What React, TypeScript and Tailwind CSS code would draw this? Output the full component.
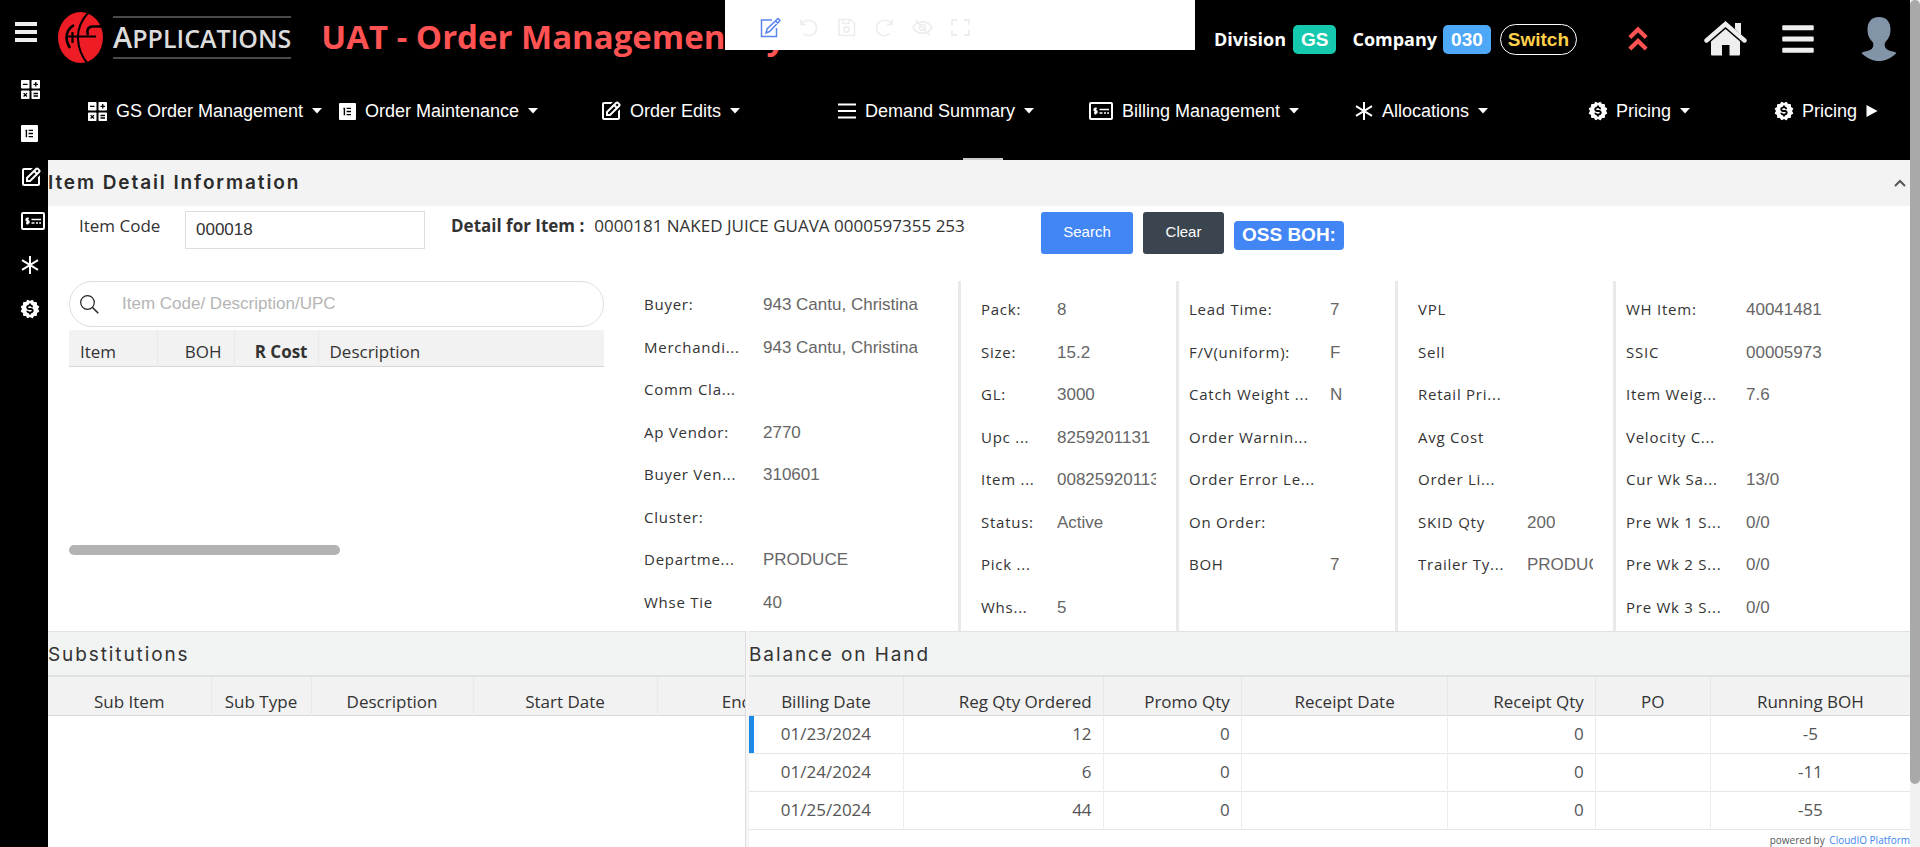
import type { ReactNode } from "react";
import { BiEdit, BiSolidBadgeDollar } from "react-icons/bi";
import { FaBars } from "react-icons/fa";

const sans = "font-['Open_Sans','Noto_Sans',sans-serif]";
const arial = "font-['Liberation_Sans',Arial,sans-serif]";
const heading = "font-['Inter','Noto_Sans',sans-serif]";

function OperatorsIcon() {
  return (
    <svg width="19" height="19" viewBox="0 0 19 19" aria-hidden="true">
      <g fill="#fff">
        <rect x="0" y="0" width="8.5" height="8.5" rx="0.8" />
        <rect x="10.5" y="0" width="8.5" height="8.5" rx="0.8" />
        <rect x="0" y="10.5" width="8.5" height="8.5" rx="0.8" />
        <rect x="10.5" y="10.5" width="8.5" height="8.5" rx="0.8" />
      </g>
      <g stroke="#000" strokeWidth="1.3">
        <path d="M2 4.3h4.5M12.5 4.3H17M14.75 2v4.5M2.6 13.1l3.4 3.4M6 13.1l-3.4 3.4M12.5 13.5H17M12.5 16H17" />
      </g>
    </svg>
  );
}

function ListBoxIcon() {
  return (
    <svg width="17" height="17" viewBox="0 0 17 17" aria-hidden="true">
      <rect width="17" height="17" rx="1" fill="#fff" />
      <path d="M5.4 4.8v7.4M4.4 5.5h1M7.6 5.4H12M7.6 8.5H12M7.6 11.6H12" stroke="#000" strokeWidth="1.4" />
    </svg>
  );
}

function LinesIcon() {
  return (
    <svg width="18" height="16" viewBox="0 0 18 16" aria-hidden="true">
      <path d="M0 1.5h18M0 8h18M0 14.5h18" stroke="#fff" strokeWidth="2" />
    </svg>
  );
}

function BillIcon() {
  return (
    <svg width="24" height="18" viewBox="0 0 24 18" aria-hidden="true">
      <rect x="1" y="1" width="22" height="16" rx="1" fill="none" stroke="#fff" strokeWidth="2" />
      <path
        d="M7.8 6.6H6.2c-1.5 0-1.5 2.2 0 2.2h.7c1.5 0 1.5 2.3 0 2.3H5M6.5 5.4v7M10.5 7.5H20M10.5 11h3M15 11h2M18.2 11H20"
        fill="none"
        stroke="#fff"
        strokeWidth="1.5"
      />
    </svg>
  );
}

function AsteriskIcon() {
  return (
    <svg width="18" height="18" viewBox="0 0 18 18" aria-hidden="true">
      <path d="M9 0v18M1 4.2l16 9.6M17 4.2L1 13.8" stroke="#fff" strokeWidth="2" />
    </svg>
  );
}

function EditIcon() {
  return <BiEdit className="-mx-0.5 size-6" aria-hidden="true" />;
}

function BadgeIcon() {
  return <BiSolidBadgeDollar className="-mx-0.5 size-[22px]" aria-hidden="true" />;
}

function SearchIcon() {
  return (
    <svg width="19" height="19" viewBox="0 0 19 19" aria-hidden="true">
      <circle cx="7.5" cy="7.5" r="6.8" fill="none" stroke="#222" strokeWidth="1.2" />
      <path d="M12.3 12.3l6 6" stroke="#222" strokeWidth="1.5" />
    </svg>
  );
}

function DoubleUpIcon() {
  return (
    <svg width="20" height="26" viewBox="0 0 20 26" aria-hidden="true">
      <path d="M1.800 11.500L10 3.500l8.200 8M1.800 23L10 15l8.200 8" fill="none" stroke="#ff5252" strokeWidth="4.200" />
    </svg>
  );
}

function HomeIcon() {
  return (
    <svg width="43" height="36" viewBox="0 0 43 36" aria-hidden="true">
      <path d="M31 2h6v12l-6-6z" fill="#eee" />
      <path d="M2.5 19.5L21.5 3l19 16.5" fill="none" stroke="#eee" strokeWidth="4.4" strokeLinecap="round" />
      <path d="M7 20.500L21.500 8L36 20.500V33.500q0 1-1 1H25.500V24h-7.500v10.500H8q-1 0-1-1z" fill="#eee" />
    </svg>
  );
}

function AvatarIcon() {
  return (
    <svg width="36" height="44" viewBox="0 0 36 44" aria-hidden="true">
      <path
        d="M18 0C10 0 6.5 5.5 6.500 12.500C6.500 19 9 22.500 12 25.500C13 29 12 31.500 9 33C5.500 34.500 2.500 34.500 0.500 36C6 41.500 12 44 18 44C24 44 30 41.500 35.500 36C33.500 34.500 30.500 34.500 27 33C24 31.500 23 29 24 25.500C27 22.500 29.500 19 29.500 12.500C29.500 5.500 26 0 18 0Z"
        fill="#8294a8"
      />
    </svg>
  );
}

function Logo() {
  return (
    <div className="flex items-center gap-[10px]">
      <svg width="45" height="51" viewBox="0 0 45 51" aria-hidden="true">
        <ellipse cx="22.5" cy="25.5" rx="22.5" ry="25.5" fill="#ee1c25" />
        <g fill="none" stroke="#000">
          <path d="M31 0C23 8 19.500 17 20 27C20.500 37 24 45 30 52" strokeWidth="2" />
          <path d="M16 13C11 16 8.500 20 8.500 25.500C8.500 30 10 33 12 36" strokeWidth="2.600" />
          <path d="M14.500 20V31M9 24.500H38" strokeWidth="2.200" />
          <path d="M45 14.500H34C29.500 15 28.500 19 30 23" strokeWidth="2.600" />
        </g>
      </svg>
      <div className={`${sans} border-y-2 border-[#4a4a4a] py-[3px] text-[29px] leading-8 font-semibold text-[#dcdcdc]`}>
        A<span className="text-[25px]">PPLICATIONS</span>
      </div>
    </div>
  );
}

function Caret() {
  return (
    <svg width="10" height="6" viewBox="0 0 10 6" aria-hidden="true">
      <path d="M0 0h10L5 5.5z" fill="#fff" />
    </svg>
  );
}

const navItems: { label: string; icon: ReactNode }[] = [
  { label: "GS Order Management", icon: <OperatorsIcon /> },
  { label: "Order Maintenance", icon: <ListBoxIcon /> },
  { label: "Order Edits", icon: <EditIcon /> },
  { label: "Demand Summary", icon: <LinesIcon /> },
  { label: "Billing Management", icon: <BillIcon /> },
  { label: "Allocations", icon: <AsteriskIcon /> },
  { label: "Pricing", icon: <BadgeIcon /> },
];

const sideItems = navItems.filter((item) => item.label !== "Demand Summary");

function EditorToolbar() {
  const glyph = "size-[21px] fill-none stroke-current";
  return (
    <div className="absolute top-0 left-[725px] flex h-[50px] w-[470px] items-center gap-[17px] bg-white pt-1 pl-[35px] text-[#ededed]">
      <button aria-label="Edit" className="text-[#5b84ee]">
        <svg className={glyph} viewBox="0 0 21 21" strokeWidth="1.5">
          <path d="M12 3H1.500v16.500h15V11M18 1.500l2 2L9.500 14.500L6 16l1-4zM15.500 4l2.500 2.500" />
        </svg>
      </button>
      <button aria-label="Undo">
        <svg className={glyph} viewBox="0 0 21 21" strokeWidth="1.6">
          <path d="M3 2.500v5h5M3.500 7C9 0 18.500 4 18.500 11C18.500 18 10 21 5.500 16.500" />
        </svg>
      </button>
      <button aria-label="Save">
        <svg className={glyph} viewBox="0 0 21 21" strokeWidth="1.6">
          <path d="M3 2.500h11.500l4 4v12H3zM7 2.500v4h6v-4" />
          <circle cx="10.5" cy="12.5" r="2.6" />
        </svg>
      </button>
      <button aria-label="Redo">
        <svg className={glyph} viewBox="0 0 21 21" strokeWidth="1.6">
          <path d="M18 2.500v5h-5M17.500 7C12 0 2.500 4 2.500 11C2.500 18 11 21 15.500 16.500" />
        </svg>
      </button>
      <button aria-label="Hide">
        <svg className={glyph} viewBox="0 0 21 21" strokeWidth="1.6">
          <path d="M1 10.500C5 3 16 3 20 10.500C16 18 5 18 1 10.500zM3 2.500l15 16" />
          <circle cx="10.5" cy="10.5" r="3" />
        </svg>
      </button>
      <button aria-label="Full screen">
        <svg className={glyph} viewBox="0 0 21 21" strokeWidth="1.8">
          <path d="M7 3H2v5M2 13v5h5M14 3h5v5M19 13v5h-5" />
        </svg>
      </button>
    </div>
  );
}

type Field = [label: string, value: string];

const detailColumns: { labelWidth: string; className: string; fields: Field[] }[] = [
  {
    labelWidth: "w-[119px]",
    className: "border-r-[3px] pl-5 pt-[2px]",
    fields: [
      ["Buyer:", "943 Cantu, Christina"],
      ["Merchandi...", "943 Cantu, Christina"],
      ["Comm Cla...", ""],
      ["Ap Vendor:", "2770"],
      ["Buyer Ven...", "310601"],
      ["Cluster:", ""],
      ["Departme...", "PRODUCE"],
      ["Whse Tie", "40"],
    ],
  },
  {
    labelWidth: "w-[76px]",
    className: "border-r-[3px] px-5 pt-[7px]",
    fields: [
      ["Pack:", "8"],
      ["Size:", "15.2"],
      ["GL:", "3000"],
      ["Upc ...", "8259201131"],
      ["Item ...", "008259201131"],
      ["Status:", "Active"],
      ["Pick ...", ""],
      ["Whs...", "5"],
    ],
  },
  {
    labelWidth: "w-[141px]",
    className: "border-r-[3px] pl-[10px] pt-[7px]",
    fields: [
      ["Lead Time:", "7"],
      ["F/V(uniform):", "F"],
      ["Catch Weight ...", "N"],
      ["Order Warnin...", ""],
      ["Order Error Le...", ""],
      ["On Order:", ""],
      ["BOH", "7"],
    ],
  },
  {
    labelWidth: "w-[109px]",
    className: "border-r-[3px] px-5 pt-[7px]",
    fields: [
      ["VPL", ""],
      ["Sell", ""],
      ["Retail Pri...", ""],
      ["Avg Cost", ""],
      ["Order Li...", ""],
      ["SKID Qty", "200"],
      ["Trailer Ty...", "PRODUCE"],
    ],
  },
  {
    labelWidth: "w-[120px]",
    className: "pl-[10px] pt-[7px]",
    fields: [
      ["WH Item:", "40041481"],
      ["SSIC", "00005973"],
      ["Item Weig...", "7.6"],
      ["Velocity C...", ""],
      ["Cur Wk Sa...", "13/0"],
      ["Pre Wk 1 S...", "0/0"],
      ["Pre Wk 2 S...", "0/0"],
      ["Pre Wk 3 S...", "0/0"],
    ],
  },
];

const balanceRows = [
  ["01/23/2024", "12", "0", "", "0", "", "-5"],
  ["01/24/2024", "6", "0", "", "0", "", "-11"],
  ["01/25/2024", "44", "0", "", "0", "", "-55"],
];

const balanceColumns = [
  { name: "Billing Date", align: "text-center" },
  { name: "Reg Qty Ordered", align: "text-right" },
  { name: "Promo Qty", align: "text-right" },
  { name: "Receipt Date", align: "text-center" },
  { name: "Receipt Qty", align: "text-right" },
  { name: "PO", align: "text-center" },
  { name: "Running BOH", align: "text-center" },
];

function PanelTitle({ children }: { children: ReactNode }) {
  return (
    <h2 className={`${heading} h-[46px] border-t border-b-2 border-[#e0e3e3] bg-[#f2f3f3] text-[19px] leading-[46px] tracking-widest text-[#333]`}>
      {children}
    </h2>
  );
}

export default function App() {
  return (
    <div className={`${sans} relative flex min-h-screen bg-white text-[#333]`}>
      <aside className="w-12 shrink-0 bg-black text-white">
        <button aria-label="Toggle menu" className="mt-[22px] ml-[15px] flex w-[22px] flex-col gap-1">
          <span className="h-1 w-full bg-[#eee]" />
          <span className="h-1 w-full bg-[#eee]" />
          <span className="h-1 w-full bg-[#eee]" />
        </button>
        <nav aria-label="Side" className="mt-[25px] pl-[21px]">
          {sideItems.map((item) => (
            <a key={item.label} href="#" aria-label={item.label} className="flex h-11 items-center">
              {item.icon}
            </a>
          ))}
        </nav>
      </aside>

      <div className="flex min-w-0 flex-1 flex-col">
        <header className="relative h-40 bg-black text-white">
          <div className="flex h-[74px] items-center pl-[10px]">
            <Logo />
            <h1 className="ml-[30px] text-[33px] font-bold whitespace-nowrap text-[#ff5252]">
              UAT - Order Management System
            </h1>
            <div className="ml-auto flex items-center pt-1 pr-[13px] text-[18px] leading-[29px] font-bold">
              <span>Division</span>
              <span className={`${arial} ml-[7px] rounded-[5px] bg-[#14c9ae] px-2 text-[19px]`}>GS</span>
              <span className="ml-4">Company</span>
              <span className={`${arial} ml-[6px] rounded-[5px] bg-[#4da8f7] px-2 text-[19px]`}>030</span>
              <button className={`${arial} ml-[9px] rounded-full border border-white px-[7px] text-[19px] font-bold text-[#ffd04a]`}>
                Switch
              </button>
              <button aria-label="Collapse header" className="ml-[51px]">
                <DoubleUpIcon />
              </button>
              <a href="#" aria-label="Home" className="ml-14">
                <HomeIcon />
              </a>
              <button aria-label="Menu" className="ml-[33px]">
                <FaBars className="size-[36px] text-[#eee]" />
              </button>
              <button aria-label="Account" className="ml-[45px]">
                <AvatarIcon />
              </button>
            </div>
          </div>
          <nav
            aria-label="Main"
            className={`${arial} grid h-[74px] grid-cols-[251fr_262fr_237fr_251fr_266fr_234fr_186fr_135fr] items-center pl-10 text-[18px]`}
          >
            {navItems.map((item) => (
              <button key={item.label} className="flex items-center gap-[9px] whitespace-nowrap">
                {item.icon}
                {item.label}
                <Caret />
              </button>
            ))}
            <button className="flex items-center gap-[9px] whitespace-nowrap">
              <BadgeIcon />
              Pricing
              <svg width="12" height="12" viewBox="0 0 12 12" aria-hidden="true">
                <path d="M0.5 0v12L11.5 6z" fill="#fff" />
              </svg>
            </button>
          </nav>
          <div className="absolute bottom-0 left-1/2 h-[2px] w-10 -translate-x-4 bg-[#ccc]" />
        </header>

        <section>
          <h2 className={`${heading} flex h-[46px] items-center justify-between bg-[#f3f3f3] pr-1 text-[19px] font-semibold tracking-widest text-[#2b2b2b]`}>
            Item Detail Information
            <button aria-label="Collapse section">
              <svg width="12" height="8" viewBox="0 0 12 8" aria-hidden="true">
                <path d="M1 7l5-5l5 5" fill="none" stroke="#555" strokeWidth="2" />
              </svg>
            </button>
          </h2>

          <div className="flex h-[75px] items-start pt-[5px] pl-[31px] text-[17px]">
            <label htmlFor="item-code" className="w-[106px] leading-[30px]">
              Item Code
            </label>
            <input
              id="item-code"
              defaultValue="000018"
              className={`${arial} h-[38px] w-[240px] border border-[#ddd] px-[10px] text-[17px] text-[#333]`}
            />
            <p className="ml-[26px] w-[590px] leading-[30px] whitespace-nowrap">
              <strong className="font-bold">Detail for Item :</strong>
              <span className="ml-[10px]">0000181 NAKED JUICE GUAVA 0000597355 253</span>
            </p>
            <div className={`${arial} flex gap-[10px] pt-px text-[15px] text-white`}>
              <button className="h-[42px] w-[92px] rounded-[3px] bg-[#4285f4] pb-[2px]">Search</button>
              <button className="h-[42px] w-[81px] rounded-[3px] bg-[#3b4550] pb-[2px]">Clear</button>
              <span className="mt-[9px] h-[29px] rounded-[4px] bg-[#4285f4] px-2 text-[19px] leading-[27px] font-bold">
                OSS BOH:
              </span>
            </div>
          </div>

          <div className="grid grid-cols-[576fr_337fr_218fr_219fr_218fr_294fr]">
            <div className="min-w-0 pr-5 pl-[21px]">
              <label className="flex h-[46px] items-center rounded-full border border-[#dfdfdf] pl-[10px]">
                <SearchIcon />
                <input
                  aria-label="Search items"
                  placeholder="Item Code/ Description/UPC"
                  className={`${arial} ml-[23px] min-w-0 flex-1 text-[17px] outline-none placeholder:text-[#b5b5b5]`}
                />
              </label>
              <table className="mt-[3px] w-full table-fixed text-[17px]">
                <thead>
                  <tr className="h-9 border-b border-[#d8d8d8] bg-[#f2f2f2] [&>th]:pt-2 [&>th]:leading-6">
                    <th className="w-[88px] border-r border-[#e9e9e9] pl-[11px] text-left font-normal">Item</th>
                    <th className="w-[77px] border-r border-[#e9e9e9] pr-3 text-right font-normal">BOH</th>
                    <th className="w-[84px] border-r border-[#e9e9e9] pr-[10px] text-right font-bold">R Cost</th>
                    <th className="pl-[11px] text-left font-normal">Description</th>
                  </tr>
                </thead>
              </table>
              <div className="mt-[178px] h-[10px] w-[271px] rounded-full bg-[#b3b3b3]" />
            </div>
            {detailColumns.map((column) => (
              <dl key={column.labelWidth} className={`${column.className} h-[350px] min-w-0 border-[#e9e9e9]`}>
                {column.fields.map(([label, value]) => (
                  <div key={label} className="flex items-baseline overflow-hidden leading-[42px] odd:h-[43px] even:h-[42px]">
                    <dt className={`${column.labelWidth} shrink-0 text-[15px] tracking-wider whitespace-nowrap`}>{label}</dt>
                    <dd className={`${arial} min-w-0 overflow-hidden text-[17px] whitespace-nowrap text-[#666]`}>{value}</dd>
                  </div>
                ))}
              </dl>
            ))}
          </div>
        </section>

        <div className="grid flex-1 grid-cols-[698fr_3fr_1161fr]">
          <section className="min-w-0 overflow-hidden border-r border-[#ddd]">
            <PanelTitle>Substitutions</PanelTitle>
            <table className="w-[811px] table-fixed text-[17px]">
              <thead>
                <tr className="h-[38px] border-b border-[#d8d8d8] bg-[#f2f2f2] [&>th]:border-r [&>th]:border-[#e9e9e9] [&>th]:pt-3 [&>th]:leading-6 [&>th]:font-normal">
                  <th className="w-[163px]">Sub Item</th>
                  <th className="w-[100px]">Sub Type</th>
                  <th className="w-[162px]">Description</th>
                  <th className="w-[184px]">Start Date</th>
                  <th>End Date</th>
                </tr>
              </thead>
            </table>
          </section>
          <div className="bg-[#f5f5f5]" />
          <section className="flex min-w-0 flex-col">
            <PanelTitle>Balance on Hand</PanelTitle>
            <table className="w-full table-fixed text-[17px]">
              <colgroup>
                <col className="w-[13.3%]" />
                <col className="w-[17.2%]" />
                <col className="w-[11.9%]" />
                <col className="w-[17.8%]" />
                <col className="w-[12.7%]" />
                <col className="w-[9.9%]" />
                <col className="w-[17.2%]" />
              </colgroup>
              <thead>
                <tr className="h-[38px] border-b border-[#d8d8d8] bg-[#f2f2f2]">
                  {balanceColumns.map((column) => (
                    <th
                      key={column.name}
                      className={`${column.align} border-r border-[#e6e6e6] px-[11px] pt-3 leading-6 font-normal whitespace-nowrap last:border-r-0`}
                    >
                      {column.name}
                    </th>
                  ))}
                </tr>
              </thead>
              <tbody>
                {balanceRows.map((row) => (
                  <tr key={row[0]} className="h-[38px] border-b border-[#e6e6e6] text-[#555]">
                    {row.map((cell, index) => (
                      <td
                        key={balanceColumns[index].name}
                        className={`${balanceColumns[index].align} border-r border-[#ececec] px-[11px] last:border-r-0 ${
                          index === 0 && row[0] === "01/23/2024" ? "shadow-[inset_5px_0_0_#1e88e5]" : ""
                        }`}
                      >
                        {cell}
                      </td>
                    ))}
                  </tr>
                ))}
              </tbody>
            </table>
            <footer className="mt-auto text-right text-[10px] leading-[14px] text-[#555]">
              powered by{" "}
              <a href="#" className="ml-[2px] text-[#4285f4]">
                CloudIO Platform
              </a>
            </footer>
          </section>
        </div>
      </div>

      <div className="w-[10px] shrink-0 bg-[#f1f1f1]">
        <div className="h-[784px] rounded-full bg-[#a9a9a9]" />
      </div>

      <EditorToolbar />
    </div>
  );
}
